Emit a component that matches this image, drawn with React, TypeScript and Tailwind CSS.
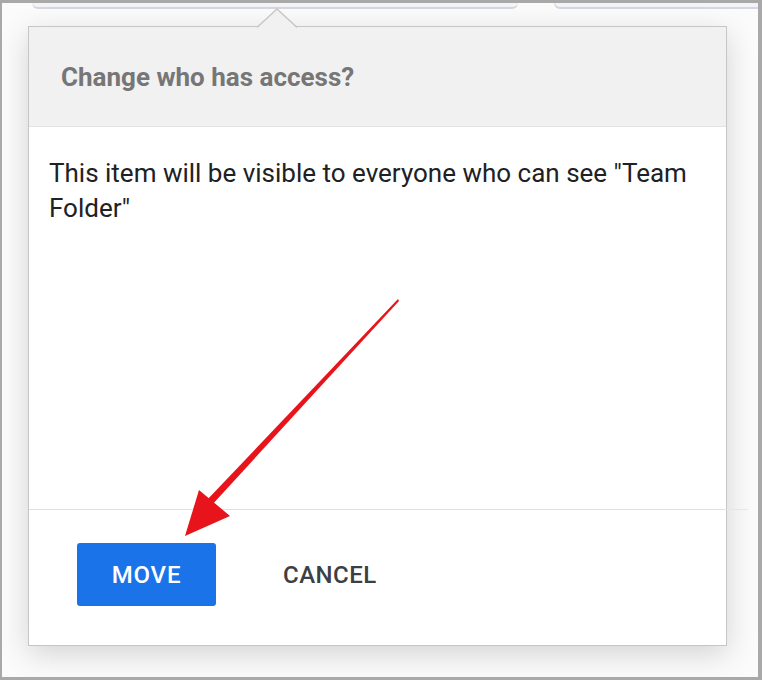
const font = { fontFamily: "Roboto, 'Liberation Sans', sans-serif" };

function Arrow() {
  return (
    <svg
      className="pointer-events-none absolute left-0 top-0"
      width="762"
      height="680"
      viewBox="0 0 762 680"
    >
      <polygon points="396,296 397,298 209,503 204,498" fill="#e8141c" />
      <polygon points="183,533 197,487 228,513" fill="#e8141c" />
    </svg>
  );
}

export default function App() {
  return (
    <div
      className="relative h-[680px] w-[762px] overflow-hidden border-t-[3px] border-r-[4px] border-b-[3px] border-l-[2px] border-[#a9a9a9] bg-[#fbfbfb]"
      style={font}
    >
      {/* bits of the page behind the popover */}
      <div className="absolute left-[30px] top-[-10px] h-[16px] w-[486px] rounded-b-[6px] border-b-[2px] border-[#d3d6e6] bg-[#f4f4f4]" />
      <div className="absolute left-[552px] top-[-10px] h-[16px] w-[220px] rounded-bl-[6px] border-b-[2px] border-l border-[#d3d6e6] bg-[#f4f4f4]" />

      <div className="relative ml-[26px] mt-[23px] flex h-[620px] w-[699px] flex-col border border-[#c6c6c6] bg-white shadow-[0_8px_28px_rgba(0,0,0,0.16)]">
        {/* notch */}
        <svg
          className="absolute left-[228px] top-[-19px]"
          width="40"
          height="20"
          viewBox="0 0 40 20"
        >
          <polygon points="0,20 20,1 40,20" fill="#f1f1f1" />
          <polyline points="0,19.5 20,1 40,19.5" fill="none" stroke="#c6c6c6" strokeWidth="1.3" />
        </svg>

        <div className="flex h-[100px] items-center border-b border-[#e3e3e3] bg-[#f1f1f1] px-[32px] pt-[2px]">
          <h2 className="text-[26px] font-bold text-[#767676]">Change who has access?</h2>
        </div>

        <div className="flex-1 px-[20px] pt-[29px]">
          <p className="text-[26px] leading-[35px] text-[#202124]">
            This item will be visible to everyone who can see "Team Folder"
          </p>
        </div>

        <div className="relative flex h-[136px] items-start gap-[52px] border-t border-[#e0e0e0] px-[48px] pt-[33px]">
          <div className="absolute right-[-22px] top-[-1px] h-px w-[22px] bg-[#e6e6e6]" />
          <button
            type="button"
            className="flex h-[63px] w-[139px] items-center justify-center rounded-[3px] bg-[#1a73e8] text-[24px] font-medium tracking-[0.8px] text-white"
          >
            MOVE
          </button>
          <button
            type="button"
            className="flex h-[63px] items-center px-[15px] text-[24px] font-medium tracking-[0.5px] text-[#3c4043]"
          >
            CANCEL
          </button>
        </div>
      </div>

      <Arrow />
    </div>
  );
}
